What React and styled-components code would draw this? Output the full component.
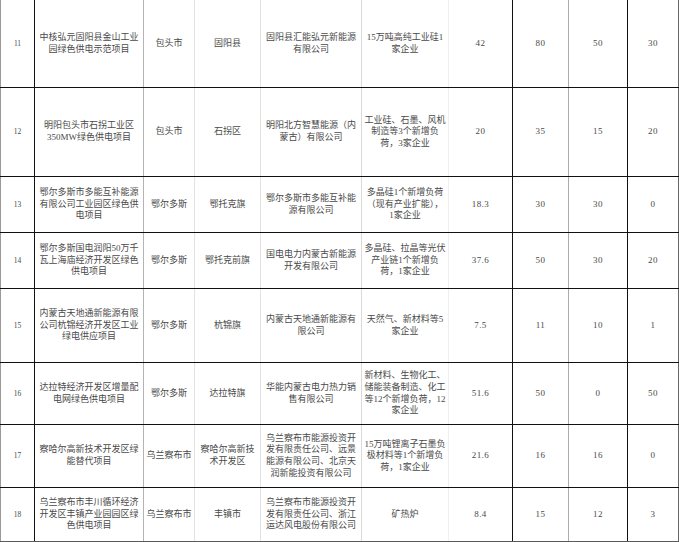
import React from 'react';
import styled, { createGlobalStyle } from 'styled-components';

const GlobalStyle = createGlobalStyle`
    html, body {
        margin: 0;
        padding: 0;
        background: #fff;
    }
    * {
        box-sizing: border-box;
    }
`

const columns = [
    { width: 34, line: '#9a9a9a' },
    { width: 109, line: '#111' },
    { width: 51, line: '#b4b4b4' },
    { width: 66, line: '#e2e2e2' },
    { width: 101, line: '#e2e2e2' },
    { width: 87, line: '#dadada' },
    { width: 64, line: '#f0f0f0' },
    { width: 56, line: '#111' },
    { width: 59, line: '#acacac' },
    { width: 52, line: '#111' },
];

const rows = [
    {
        height: 88, no: '11',
        project: '中核弘元固阳县金山工业\n园绿色供电示范项目',
        city: '包头市', county: '固阳县',
        company: '固阳县汇能弘元新能源\n有限公司',
        load: '15万吨高纯工业硅1\n家企业',
        values: ['42', '80', '50', '30'],
    },
    {
        height: 89, no: '12',
        project: '明阳包头市石拐工业区\n350MW绿色供电项目',
        city: '包头市', county: '石拐区',
        company: '明阳北方智慧能源（内\n蒙古）有限公司',
        load: '工业硅、石墨、风机\n制造等3个新增负\n荷，3家企业',
        values: ['20', '35', '15', '20'],
    },
    {
        height: 56, no: '13',
        project: '鄂尔多斯市多能互补能源\n有限公司工业园区绿色供\n电项目',
        city: '鄂尔多斯', county: '鄂托克旗',
        company: '鄂尔多斯市多能互补能\n源有限公司',
        load: '多晶硅1个新增负荷\n（现有产业扩能），\n1家企业',
        values: ['18.3', '30', '30', '0'],
    },
    {
        height: 56, no: '14',
        project: '鄂尔多斯国电润阳50万千\n瓦上海庙经济开发区绿色\n供电项目',
        city: '鄂尔多斯', county: '鄂托克前旗',
        company: '国电电力内蒙古新能源\n开发有限公司',
        load: '多晶硅、拉晶等光伏\n产业链1个新增负\n荷，1家企业',
        values: ['37.6', '50', '30', '20'],
    },
    {
        height: 74, no: '15',
        project: '内蒙古天地通新能源有限\n公司杭锦经济开发区工业\n绿电供应项目',
        city: '鄂尔多斯', county: '杭锦旗',
        company: '内蒙古天地通新能源有\n限公司',
        load: '天然气、新材料等5\n家企业',
        values: ['7.5', '11', '10', '1'],
    },
    {
        height: 62, no: '16',
        project: '达拉特经济开发区增量配\n电网绿色供电项目',
        city: '鄂尔多斯', county: '达拉特旗',
        company: '华能内蒙古电力热力销\n售有限公司',
        load: '新材料、生物化工、\n储能装备制造、化工\n等12个新增负荷，12\n家企业',
        values: ['51.6', '50', '0', '50'],
    },
    {
        height: 63, no: '17',
        project: '察哈尔高新技术开发区绿\n能替代项目',
        city: '乌兰察布市', county: '察哈尔高新技\n术开发区',
        company: '乌兰察布市能源投资开\n发有限责任公司、远景\n能源有限公司、北京天\n润新能投资有限公司',
        load: '15万吨锂离子石墨负\n极材料等1个新增负\n荷，1家企业',
        values: ['21.6', '16', '16', '0'],
    },
    {
        height: 54, no: '18', last: true,
        project: '乌兰察布市丰川循环经济\n开发区丰镇产业园园区绿\n色供电项目',
        city: '乌兰察布市', county: '丰镇市',
        company: '乌兰察布市能源投资开\n发有限责任公司、浙江\n运达风电股份有限公司',
        load: '矿热炉',
        values: ['8.4', '15', '12', '3'],
    },
];

const Sheet = styled.div`
    width: 679px;
    display: flex;
    flex-direction: column;
    font-family: "Liberation Serif", "Noto Sans CJK SC", serif;
    color: #4a4a4a;
`

const Row = styled.div`
    display: grid;
    grid-template-columns: ${columns.map(c => c.width + 'px').join(' ')};
    height: ${p => p.$height}px;
    border-bottom: 1px solid ${p => p.$last ? '#5a5a5a' : '#111'};
`

const Cell = styled.div`
    display: flex;
    align-items: center;
    justify-content: center;
    text-align: center;
    white-space: pre;
    overflow: hidden;
    font-size: ${p => p.$small ? 7.5 : 9}px;
    line-height: 11.6px;
    letter-spacing: ${p => p.$spaced ? 0.4 : 0}px;
    border-left: 1px solid ${p => p.$line};
    border-right: ${p => p.$edge ? '1px solid #666' : 'none'};
`

const App = () => {
    return (
        <>
            <GlobalStyle />
            <Sheet>
                {rows.map(r => {
                    const texts = [r.no, r.project, r.city, r.county, r.company, r.load, ...r.values];
                    return (
                        <Row key={r.no} $height={r.height} $last={r.last}>
                            {texts.map((t, i) => (
                                <Cell
                                    key={i}
                                    $line={columns[i].line}
                                    $small={i === 0}
                                    $spaced={i > 5}
                                    $edge={i === texts.length - 1}
                                >
                                    {t}
                                </Cell>
                            ))}
                        </Row>
                    );
                })}
            </Sheet>
        </>
    );
}

export default App
